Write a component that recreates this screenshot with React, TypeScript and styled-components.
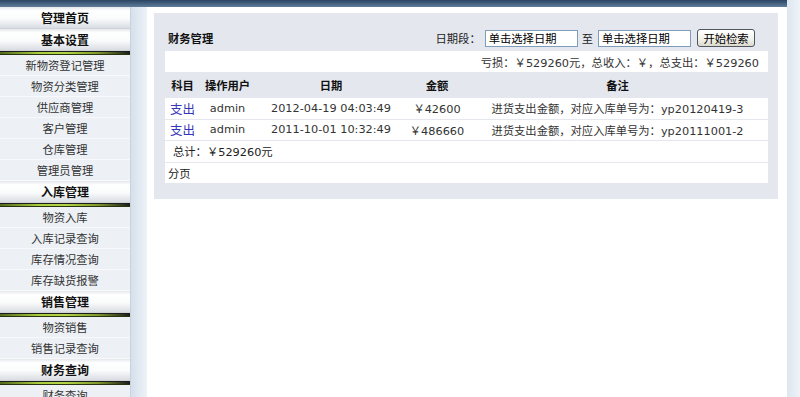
import React from 'react';
import styled, { createGlobalStyle } from 'styled-components';

const GlobalStyle = createGlobalStyle`
  html, body {
    margin: 0;
    padding: 0;
    background: #fff;
  }
  body {
    font-family: 'DejaVu Sans', 'Noto Sans CJK SC', sans-serif;
    font-size: 11.3px;
    color: #333;
  }
`;

const Page = styled.div`
  display: grid;
  grid-template-columns: 1fr 13px;
  height: 397px;
  overflow: hidden;
`;

const Frame = styled.div`
  display: flex;
  flex-direction: column;
  min-width: 0;
`;

const TopBar = styled.div`
  height: 7px;
  flex: none;
  background: linear-gradient(#2a4462, #5f7e9c);
`;

const RightStrip = styled.div`
  background: linear-gradient(to right, #dde6ef, #eef3f8);
`;

const Body = styled.div`
  flex: 1;
  display: flex;
  min-height: 0;
`;

const Sidebar = styled.div`
  width: 130px;
  flex: none;
  display: flex;
  flex-direction: column;
  background: #edf1f5;
  border-right: 1px solid #c9d3de;
`;

const Gutter = styled.div`
  width: 16px;
  flex: none;
  background: linear-gradient(to right, #d6e0eb, #edf2f8);
`;

const MenuHead = styled.div`
  height: 22px;
  flex: none;
  display: flex;
  align-items: center;
  justify-content: center;
  box-sizing: border-box;
  font-weight: bold;
  font-size: 12px;
  color: #111;
  background: linear-gradient(#e4e7eb, #ffffff 18%, #fafbfc 55%, #d9dde2);
  border-bottom: 1px solid #cfd3d8;
`;

const GreenBar = styled.div`
  height: 4px;
  flex: none;
  box-sizing: border-box;
  border-top: 1px solid #1c1c1c;
  border-bottom: 1px solid #2a3410;
  background: linear-gradient(to right, #52681c 0%, #a9cd3d 30%, #b4d447 50%, #7f9a2c 75%, #1a1a1a 100%);
`;

const MenuItem = styled.div`
  height: 21px;
  flex: none;
  display: flex;
  align-items: center;
  justify-content: center;
  box-sizing: border-box;
  color: #333;
  border-bottom: 1px solid #f7f9fb;
  font-family: 'Noto Sans CJK SC', sans-serif;
`;

const Main = styled.div`
  flex: 1;
  min-width: 0;
  background: #fff;
  padding: 6px 9px 0 7px;
`;

const Panel = styled.div`
  background: #e4e8ee;
  padding: 12px 10px 16px 11px;
`;

const TitleRow = styled.div`
  height: 26px;
  display: flex;
  align-items: center;
  justify-content: space-between;
  padding: 0 13px 0 3px;
`;

const Title = styled.div`
  font-weight: bold;
  color: #111;
  font-family: 'Noto Sans CJK SC', sans-serif;
`;

const Search = styled.div`
  display: flex;
  align-items: center;
  color: #222;
`;

const SearchLabel = styled.span`
  margin-right: 4px;
`;

const DateInput = styled.input`
  width: 93px;
  height: 17px;
  box-sizing: border-box;
  border: 1px solid #7f9db9;
  padding: 0 3px;
  font: inherit;
  color: #000;
  background: #fff;
  outline: none;
`;

const Sep = styled.span`
  margin: 0 5px 0 4px;
`;

const SearchButton = styled.button`
  width: 58px;
  height: 18px;
  margin-left: 6px;
  padding: 0;
  border: 1px solid #4e5660;
  border-radius: 3px;
  background: linear-gradient(#ffffff, #f2f1ea 60%, #dcd9cc);
  font: inherit;
  color: #000;
`;

const Summary = styled.div`
  height: 21px;
  display: flex;
  align-items: center;
  justify-content: flex-end;
  padding-right: 9px;
  background: #fff;
`;

const columns = '35px 55px 152px 60px 1fr';

const HeadRow = styled.div`
  height: 25px;
  display: grid;
  grid-template-columns: ${columns};
  align-items: center;
  font-weight: bold;
  color: #111;
  text-align: center;
`;

const Row = styled.div`
  height: 21.5px;
  box-sizing: border-box;
  border-top: 1px solid #e4e8ee;
  background: #fff;
  display: grid;
  grid-template-columns: ${columns};
  align-items: center;
  text-align: center;
`;

const Kind = styled.span`
  color: #3535b8;
  font-size: 12.5px;
`;

const FullRow = styled.div<{ $pad: number }>`
  height: 21.5px;
  box-sizing: border-box;
  border-top: 1px solid #e4e8ee;
  background: #fff;
  display: flex;
  align-items: center;
  padding-left: ${(p) => p.$pad}px;
  color: #222;
`;

const menu: { head: string; items: string[] }[] = [
  { head: '管理首页', items: [] },
  { head: '基本设置', items: ['新物资登记管理', '物资分类管理', '供应商管理', '客户管理', '仓库管理', '管理员管理'] },
  { head: '入库管理', items: ['物资入库', '入库记录查询', '库存情况查询', '库存缺货报警'] },
  { head: '销售管理', items: ['物资销售', '销售记录查询'] },
  { head: '财务查询', items: ['财务查询'] },
];

const records = [
  { kind: '支出', user: 'admin', date: '2012-04-19 04:03:49', money: '￥42600', note: '进货支出金额，对应入库单号为：yp20120419-3' },
  { kind: '支出', user: 'admin', date: '2011-10-01 10:32:49', money: '￥486660', note: '进货支出金额，对应入库单号为：yp20111001-2' },
];

export default function App() {
  return (
    <Page>
      <GlobalStyle />
      <Frame>
        <TopBar />
        <Body>
          <Sidebar>
            {menu.map((group, i) => (
              <React.Fragment key={group.head}>
                <MenuHead>{group.head}</MenuHead>
                {i > 0 && <GreenBar />}
                {group.items.map((item) => (
                  <MenuItem key={item}>{item}</MenuItem>
                ))}
              </React.Fragment>
            ))}
          </Sidebar>
          <Gutter />
          <Main>
            <Panel>
              <TitleRow>
                <Title>财务管理</Title>
                <Search>
                  <SearchLabel>日期段：</SearchLabel>
                  <DateInput defaultValue='单击选择日期' readOnly />
                  <Sep>至</Sep>
                  <DateInput defaultValue='单击选择日期' readOnly />
                  <SearchButton>开始检索</SearchButton>
                </Search>
              </TitleRow>
              <Summary>亏损：￥529260元，总收入：￥，总支出：￥529260</Summary>
              <HeadRow>
                <span>科目</span>
                <span>操作用户</span>
                <span>日期</span>
                <span>金额</span>
                <span>备注</span>
              </HeadRow>
              {records.map((r) => (
                <Row key={r.date}>
                  <Kind>{r.kind}</Kind>
                  <span>{r.user}</span>
                  <span>{r.date}</span>
                  <span>{r.money}</span>
                  <span>{r.note}</span>
                </Row>
              ))}
              <FullRow $pad={8}>总计：￥529260元</FullRow>
              <FullRow $pad={3}>分页</FullRow>
            </Panel>
          </Main>
        </Body>
      </Frame>
      <RightStrip />
    </Page>
  );
}
